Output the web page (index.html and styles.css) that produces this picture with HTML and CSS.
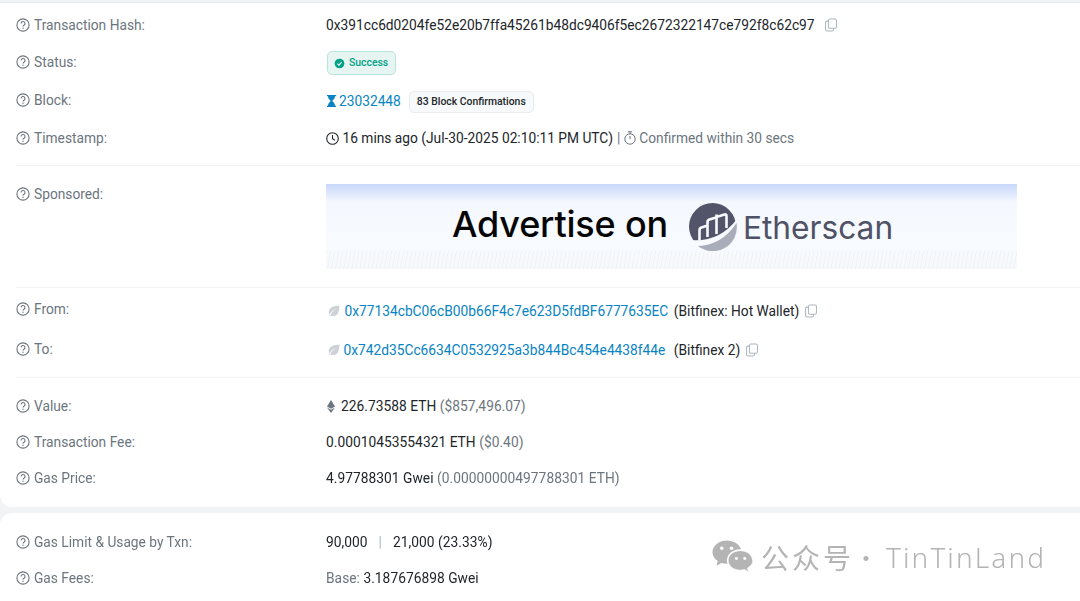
FILE: index.html
```html
<!DOCTYPE html>
<html lang="en">
<head>
<meta charset="utf-8">
<title>Transaction Details</title>
<link rel="stylesheet" href="styles.css">
</head>
<body>
<svg class="defs" width="0" height="0" aria-hidden="true">
  <symbol id="q" viewBox="0 0 14 14">
    <circle cx="7" cy="7" r="6.1" fill="none" stroke="currentColor" stroke-width="1.1"/>
    <path d="M5.1 5.5a1.95 1.95 0 1 1 2.9 1.7c-.7.4-1 .7-1 1.3" fill="none" stroke="currentColor" stroke-width="1.1"/>
    <circle cx="7" cy="10.2" r=".7" fill="currentColor"/>
  </symbol>
  <symbol id="copy" viewBox="0 0 13 14">
    <rect x="3.7" y=".6" width="8.7" height="10" rx="1.6" fill="none" stroke="currentColor" stroke-width="1.1"/>
    <path d="M3.7 2.8H2.2A1.6 1.6 0 0 0 .6 4.4v7.4a1.6 1.6 0 0 0 1.6 1.6h5.4a1.6 1.6 0 0 0 1.6-1.6v-1.2" fill="none" stroke="currentColor" stroke-width="1.1"/>
  </symbol>
  <symbol id="leaf" viewBox="0 0 12 12">
    <path d="M11.5.8C7.5.6 2.8 1.5 1.2 5c-.8 1.9-.5 3.6.3 4.6C3 7 5.500 5 8.500 3.600 6 5.300 3.500 7.700 2.200 10.400c2.600 1.300 5.800.9 7.500-1.700C11.200 6.400 11.300 3.500 11.500.8z" fill="currentColor"/>
    <path d="M.8 11.400 2.200 10" stroke="currentColor" stroke-width=".8"/>
  </symbol>
</svg>

<main class="page">
  <section class="card card-first">
    <div class="group">
      <div class="row row-hash">
        <div class="label"><svg class="q"><use href="#q"/></svg>Transaction Hash:</div>
        <div class="value"><span>0x391cc6d0204fe52e20b7ffa45261b48dc9406f5ec2672322147ce792f8c62c97</span><svg class="copy copy-hash"><use href="#copy"/></svg></div>
      </div>
      <div class="row row-status">
        <div class="label"><svg class="q"><use href="#q"/></svg>Status:</div>
        <div class="value value-down">
          <span class="badge-success">
            <svg class="check" viewBox="0 0 12 12"><circle cx="6" cy="6" r="5.300" fill="currentColor"/><path d="M3.600 6.200 5.300 7.800 8.400 4.500" fill="none" stroke="#e6f5f1" stroke-width="1.300"/></svg>
            <span>Success</span>
          </span>
        </div>
      </div>
      <div class="row row-block">
        <div class="label"><svg class="q"><use href="#q"/></svg>Block:</div>
        <div class="value value-down">
          <svg class="hourglass" viewBox="0 0 9 12"><path d="M0 0h9v1.300H8C8 3.500 6.500 5 5.200 6 6.500 7 8 8.500 8 10.700h1V12H0v-1.300h1C1 8.500 2.500 7 3.800 6 2.500 5 1 3.500 1 1.300H0z" fill="currentColor"/></svg>
          <a class="link">23032448</a>
          <span class="badge-conf">83 Block Confirmations</span>
        </div>
      </div>
      <div class="row row-time">
        <div class="label"><svg class="q"><use href="#q"/></svg>Timestamp:</div>
        <div class="value">
          <svg class="clock" viewBox="0 0 13 13"><circle cx="6.500" cy="6.500" r="5.800" fill="none" stroke="currentColor" stroke-width="1.100"/><path d="M6.500 3v3.700l2.400 1.500" fill="none" stroke="currentColor" stroke-width="1.100"/></svg>
          <span>16 mins ago (Jul-30-2025 02:10:11 PM UTC)</span>
          <span class="muted sep">|</span>
          <svg class="watch" viewBox="0 0 12 14"><circle cx="6" cy="8" r="5.200" fill="none" stroke="currentColor" stroke-width="1"/><path d="M4 .8h4M6 .8v2.200M6 5v3.200" fill="none" stroke="currentColor" stroke-width="1"/></svg>
          <span class="muted">Confirmed within 30 secs</span>
        </div>
      </div>
    </div>

    <div class="group group-ad">
      <div class="row row-ad">
        <div class="label"><svg class="q"><use href="#q"/></svg>Sponsored:</div>
        <div class="ad">
          <span class="ad-title">Advertise on</span>
          <svg class="ad-logo" viewBox="0 0 48 48">
            <circle cx="23.500" cy="23.500" r="23.500" fill="#525469"/>
            <path d="M0 37 Q30 40 48 16 V48 H0z" fill="#f7fafe"/>
            <path d="M47.500 20 A24 24 0 0 1 9 43 Q33 42 47.500 20z" fill="#a9adb9"/>
            <path d="M10.500 37V27q0-2 2-2.600l6-1.900V34M18.500 23V19q0-2 2-2.600l7-2.200V31M27.500 15V11.500M27.500 14l8-2.500q2-.6 2 1.500V25" fill="none" stroke="#f7fafe" stroke-width="2.600"/>
          </svg>
          <span class="ad-brand">Etherscan</span>
        </div>
      </div>
    </div>

    <div class="group group-addr">
      <div class="row row-from">
        <div class="label"><svg class="q"><use href="#q"/></svg>From:</div>
        <div class="value value-from">
          <svg class="leaf"><use href="#leaf"/></svg>
          <a class="link addr-from">0x77134cbC06cB00b66F4c7e623D5fdBF6777635EC</a>
          <span>(Bitfinex: Hot Wallet)</span>
          <svg class="copy"><use href="#copy"/></svg>
        </div>
      </div>
      <div class="row row-to">
        <div class="label"><svg class="q"><use href="#q"/></svg>To:</div>
        <div class="value value-down">
          <svg class="leaf leaf-to"><use href="#leaf"/></svg>
          <a class="link addr-to">0x742d35Cc6634C0532925a3b844Bc454e4438f44e</a>
          <span>(Bitfinex 2)</span>
          <svg class="copy"><use href="#copy"/></svg>
        </div>
      </div>
    </div>

    <div class="group group-last">
      <div class="row row-36">
        <div class="label"><svg class="q"><use href="#q"/></svg>Value:</div>
        <div class="value value-wide">
          <svg class="eth" viewBox="0 0 8 13"><path d="M4 0 8 6.400 4 8.700 0 6.400z" fill="#6c757e"/><path d="M0 7.400 4 9.800 8 7.400 4 13z" fill="#6c757e"/></svg>
          <span>226.73588 ETH <span class="muted">($857,496.07)</span></span>
        </div>
      </div>
      <div class="row row-36">
        <div class="label"><svg class="q"><use href="#q"/></svg>Transaction Fee:</div>
        <div class="value value-wide"><span>0.00010453554321 ETH <span class="muted">($0.40)</span></span></div>
      </div>
      <div class="row row-36">
        <div class="label"><svg class="q"><use href="#q"/></svg>Gas Price:</div>
        <div class="value value-wide"><span>4.97788301 Gwei <span class="muted">(0.00000000497788301 ETH)</span></span></div>
      </div>
    </div>
  </section>

  <section class="card card-second">
    <div class="row row-36">
      <div class="label"><svg class="q"><use href="#q"/></svg>Gas Limit &amp; Usage by Txn:</div>
      <div class="value value-wide"><span>90,000</span><span class="bar">|</span><span>21,000 (23.33%)</span></div>
    </div>
    <div class="row row-36">
      <div class="label"><svg class="q"><use href="#q"/></svg>Gas Fees:</div>
      <div class="value value-wide"><span><span class="muted">Base:</span> 3.187676898 Gwei</span></div>
    </div>
  </section>
</main>

<div class="watermark">
  <svg class="wechat" viewBox="0 0 42 34">
    <path d="M15 0C7 0 .5 5.300.5 12c0 3.800 2.100 7 5.400 9.200L4.500 26l5.200-2.800c1.800.5 3.400.8 5.300.8h1C15.500 22.800 15.300 21.500 15.300 20.500c0-6.400 6-11.500 13.500-11.500h1C28.200 3.800 22.200 0 15 0z" fill="currentColor"/>
    <circle cx="10" cy="8" r="1.800" fill="#fff"/><circle cx="20" cy="8" r="1.800" fill="#fff"/>
    <path d="M41.500 20.500C41.500 14.800 35.900 10.500 29 10.500s-12.500 4.300-12.500 10 5.600 10 12.500 10c1.500 0 3-.3 4.300-.7l4.200 2.700-1.100-4.200c3.500-1.900 5.600-4.600 5.600-7.800z" fill="currentColor" stroke="#fff" stroke-width=".8"/>
    <circle cx="25" cy="18.500" r="1.500" fill="#fff"/><circle cx="33.500" cy="18.500" r="1.500" fill="#fff"/>
  </svg>
  <span class="wm-cn">公众号</span><span class="wm-dot">·</span><span class="wm-en">TinTinLand</span>
</div>
</body>
</html>
```

FILE: styles.css
```css
* { box-sizing: border-box; }
html, body { margin: 0; padding: 0; }
body {
  width: 1080px;
  height: 601px;
  overflow: hidden;
  position: relative;
  background: #f1f3f5;
  font-family: Roboto, "Liberation Sans", sans-serif;
  font-size: 13.75px;
  line-height: 20px;
  color: #212529;
}
.defs { position: absolute; }
.page { display: flex; flex-direction: column; gap: 6px; padding-top: 2px; filter: blur(.4px); }
.card { background: #fff; padding-left: 16px; }
.card-first {
  height: 505px;
  padding-top: 3px;
  border-top: 1px solid #e9ecef;
  border-bottom-left-radius: 12px;
}
.card-second { height: 100px; padding-top: 11px; border-radius: 12px 0 0 0; }
.group { border-bottom: 1px solid #f1f3f5; }
.group-last { border-bottom: 0; padding-top: 10px; }
.group-ad { padding-top: 18px; height: 122px; }
.group-addr { height: 90px; }
.row { display: flex; }
.label {
  width: 310px;
  flex: none;
  display: flex;
  align-items: center;
  gap: 4px;
  height: 20px;
  color: #6c757e;
}
.q { width: 14px; height: 14px; color: #6c757e; flex: none; }
.value { display: flex; align-items: center; white-space: nowrap; height: 20px; }
.value-down { margin-top: 1px; }
.value-from { margin-top: 2px; }
.value-wide { letter-spacing: .04px; }
.muted { color: #6c757e; }
.link { color: #0784c3; }

.row-hash { height: 37px; padding-top: 9px; }
.row-status { height: 38px; padding-top: 9px; }
.row-block { height: 38px; padding-top: 9px; }
.row-time { height: 46px; padding-top: 9px; }
.row-36 { height: 36px; padding-top: 8px; }

.copy { width: 12px; height: 14px; color: #adb5bd; flex: none; margin-left: 6px; }
.copy-hash { margin-left: 10px; }

.badge-success {
  display: flex;
  align-items: center;
  gap: 4px;
  height: 24px;
  margin-left: 1px;
  padding: 0 7px 0 6px;
  border: 1px solid #b7e5d9;
  border-radius: 5px;
  background: #e6f5f1;
  color: #00a186;
  font-size: 10.4px;
  font-weight: 500;
}
.check { width: 11px; height: 11px; }

.hourglass { width: 9px; height: 12px; color: #0784c3; margin: 0 3px 0 1px; }
.badge-conf {
  display: flex;
  align-items: center;
  height: 22px;
  margin: 1px 0 0 8px;
  padding: 0 7px;
  background: #f8f9fa;
  border: 1px solid #e9ecef;
  border-radius: 5px;
  font-size: 10.4px;
  font-weight: 500;
  color: #212529;
}
.clock { width: 13px; height: 13px; margin-right: 3.500px; }
.sep { margin: 0 4px; }
.watch { width: 12px; height: 14px; color: #6c757e; margin-right: 3px; }

.row-ad { height: 85px; }
.ad {
  width: 691px;
  height: 85px;
  display: flex;
  align-items: center;
  padding: 0 0 4px 126px;
  background:
    repeating-linear-gradient(100deg, #f1f3f7 0 1px, transparent 1px 4px) bottom / 100% 18px no-repeat,
    linear-gradient(#c9d9fb 0, #dfe8fc 10px, #f4f8fe 18px, #f8fbff 60px, #f6f8fb 85px);
}
.ad-title {
  margin-bottom: 2px;
  font-family: Inter, Roboto, sans-serif;
  font-size: 36px;
  font-weight: 500;
  color: #050505;
  line-height: 40px;
  letter-spacing: -.2px;
}
.ad-logo { width: 48px; height: 48px; margin: 5px 0 0 21px; flex: none; }
.ad-brand {
  margin: 6px 0 0 6px;
  font-family: Inter, Roboto, sans-serif;
  font-size: 31.700px;
  line-height: 40px;
  color: #4f5165;
}

.leaf { width: 12px; height: 12px; color: #ced2d6; margin: 0 4.500px 0 2px; }
.leaf-to { margin-right: 3.500px; }
.addr-from { margin-right: 5.500px; }
.addr-to { margin-right: 8.500px; }
.row-from { height: 40px; padding-top: 11px; }
.row-to { height: 30px; padding-top: 11px; }

.eth { width: 8px; height: 13px; margin-right: 6px; margin-left: 1px; }
.bar { color: #adb5bd; margin: 0 11px; }

.watermark {
  position: absolute;
  left: 712px;
  top: 540px;
  display: flex;
  align-items: center;
  color: #b4b4b4;
  height: 34px;
}
.wechat { width: 41px; height: 34px; }
.wm-cn {
  margin-left: 8px;
  font-family: "Noto Sans CJK SC", sans-serif;
  font-size: 28px;
  line-height: 34px;
  letter-spacing: 3px;
}
.wm-dot { margin-left: 0; font-size: 24px; font-family: "Noto Sans CJK SC", sans-serif; }
.wm-en {
  margin-left: 8px;
  font-family: "Noto Sans", sans-serif;
  font-size: 28px;
  font-weight: 300;
  letter-spacing: 2.100px;
}
```
